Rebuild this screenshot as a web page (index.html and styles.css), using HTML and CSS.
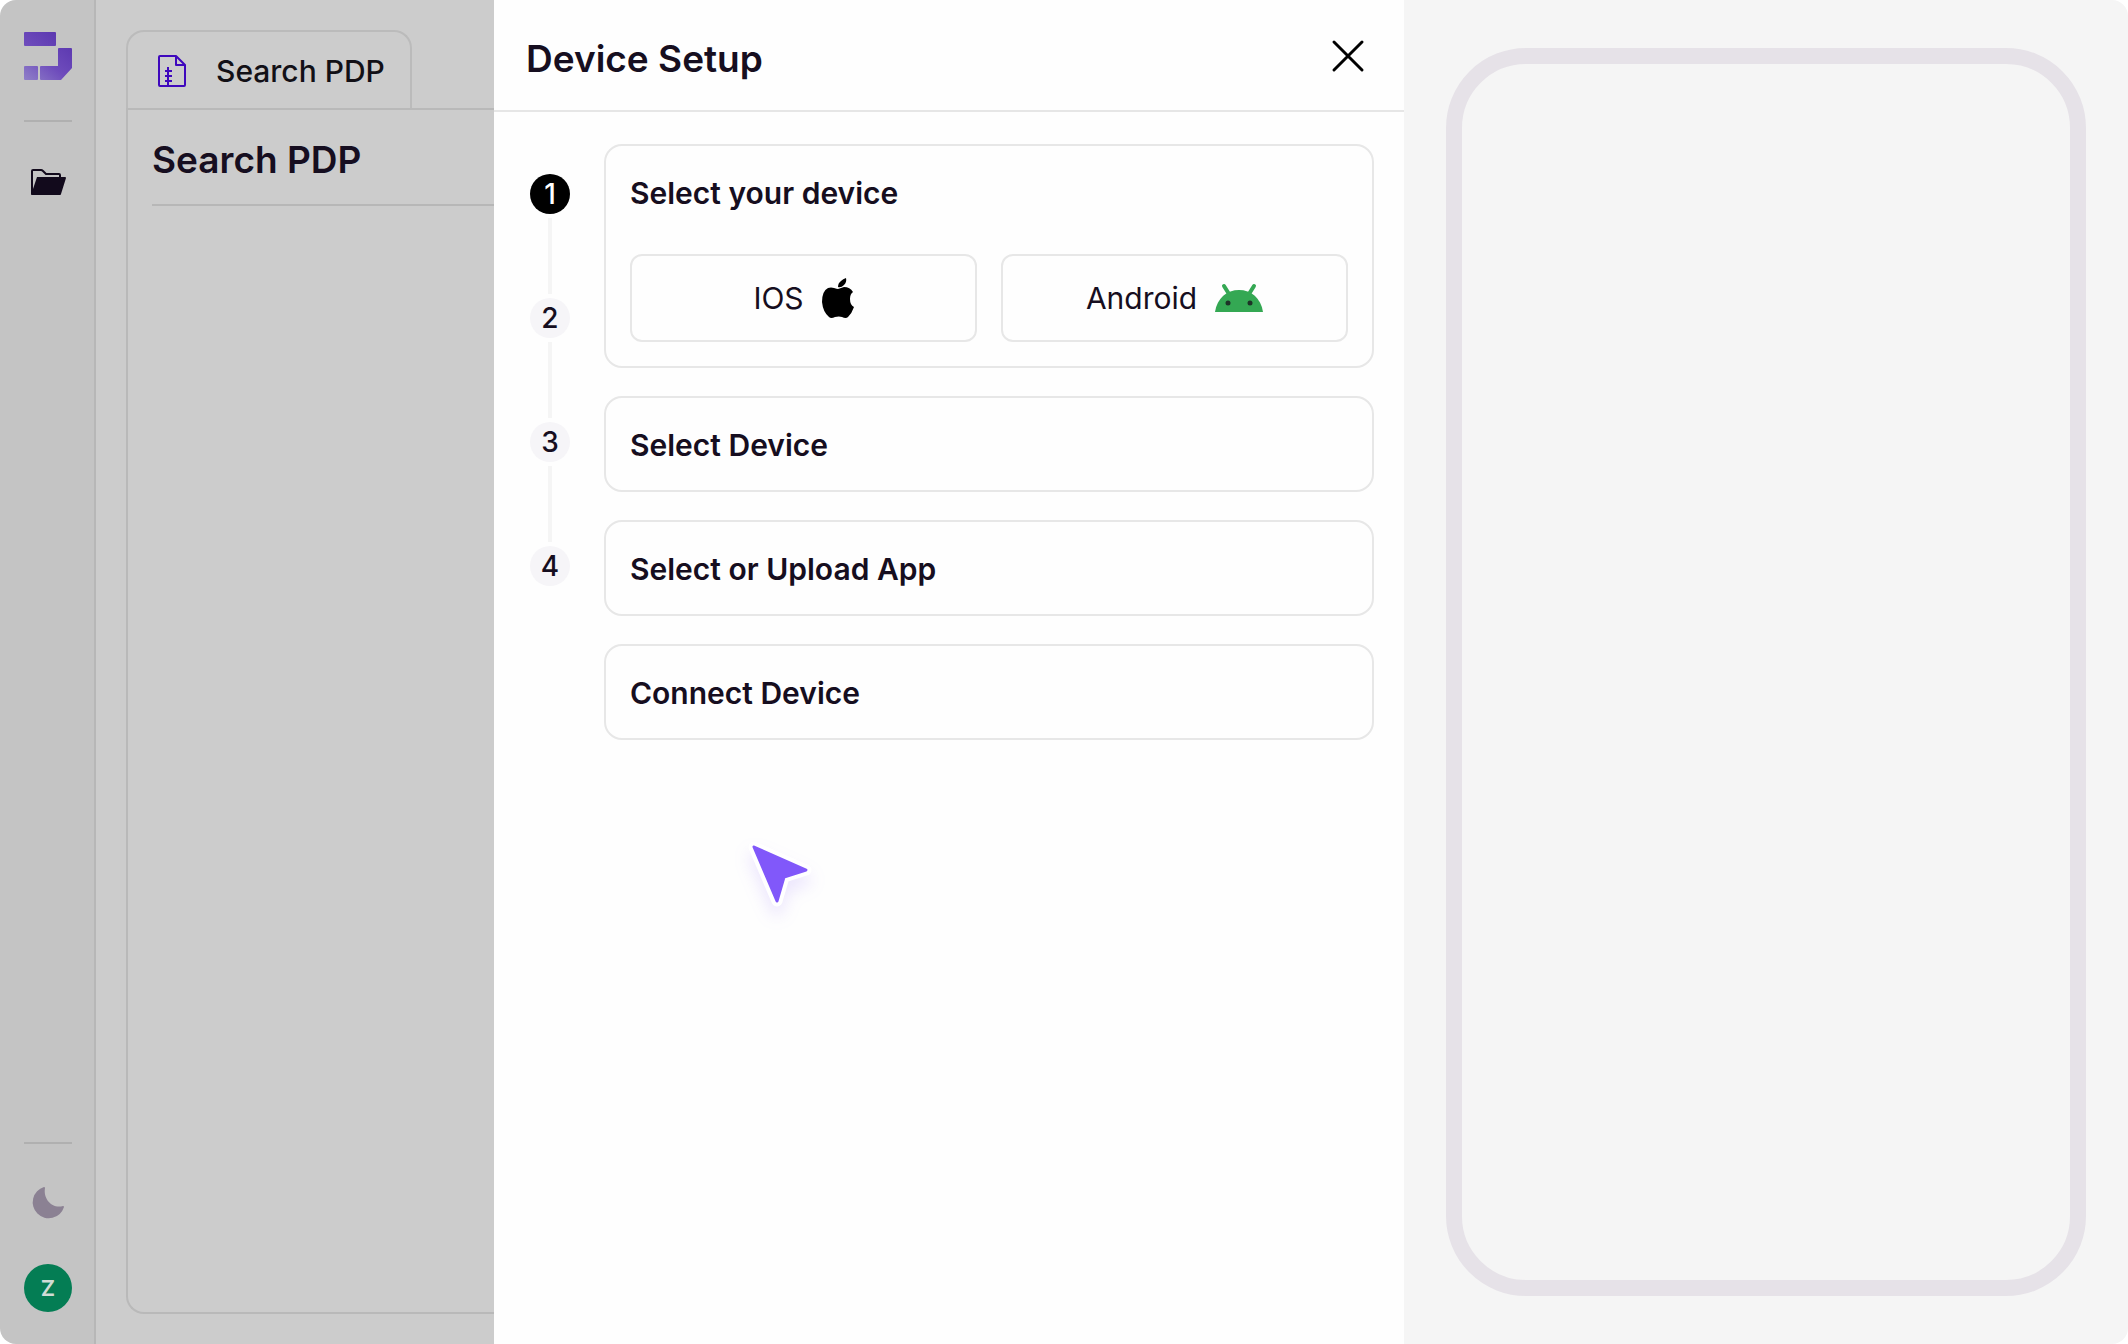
FILE: index.html
```html
<!DOCTYPE html>
<html lang="en">
<head>
<meta charset="UTF-8">
<meta name="viewport" content="width=device-width, initial-scale=1">
<title>Device Setup</title>
<link rel="stylesheet" href="styles.css">
</head>
<body>
<div class="app">
	<nav class="sidebar">
		<a href="#" class="logo" aria-label="Home">
			<svg width="48" height="48" viewBox="0 0 48 48">
				<defs>
					<linearGradient id="logoFill" x1="0" y1="48" x2="36" y2="4" gradientUnits="userSpaceOnUse">
						<stop offset="0" stop-color="#9080c8" />
						<stop offset="0.5" stop-color="#6e4cbc" />
						<stop offset="1" stop-color="#5c38b0" />
					</linearGradient>
				</defs>
				<g fill="url(#logoFill)">
					<rect width="32" height="14" rx="1" />
					<path d="M35 16h12a1 1 0 0 1 1 1v19L37 48H17a1 1 0 0 1-1-1V35a1 1 0 0 1 1-1h17V17a1 1 0 0 1 1-1z" />
					<rect y="34" width="14" height="14" rx="1" />
				</g>
			</svg>
		</a>
		<hr />
		<a href="#" class="folder" aria-label="Projects">
			<svg width="36" height="28" viewBox="0 0 36 28">
				<path d="M2 26V3q0-1 1-1h8q1 0 2 1l3 3h13q1 0 1 1v3" fill="none" stroke="#120a1c" stroke-width="2" />
				<path d="M7 9h28q1 0 1 1l-5 16q0 1-1 1H1z" fill="#120a1c" />
			</svg>
		</a>
		<div class="sidebar-bottom">
			<hr />
			<button type="button" class="theme" aria-label="Dark mode">
				<svg width="32" height="32" viewBox="0 0 32 32">
					<path d="M13 1C11 12 20 22 31 19Q32 19 32 20A16 16 0 1 1 12 0Q13 0 13 1z" fill="#8b8193" />
				</svg>
			</button>
			<button type="button" class="avatar">Z</button>
		</div>
	</nav>
	<main class="workspace">
		<a href="#" class="tab">
			<svg width="28" height="32" viewBox="0 0 28 32">
				<g fill="none" stroke="#3f08bd" stroke-width="2" stroke-linejoin="round">
					<path d="M2 1h16l9 9v20q0 1-1 1H2q-1 0-1-1V2q0-1 1-1z" />
					<path d="M18 1v9h9M10 12v18M7 16h7M7 21h7M7 26h7" />
				</g>
			</svg>
			<span>Search PDP</span>
		</a>
		<section class="panel">
			<h1>Search PDP</h1>
		</section>
	</main>
	<section class="drawer">
		<header>
			<h2>Device Setup</h2>
			<button type="button" class="close" aria-label="Close">
				<svg width="30" height="30" viewBox="0 0 30 30">
					<path d="M1 1l28 28M29 1L1 29" stroke="#000" stroke-width="3" stroke-linecap="round" />
				</svg>
			</button>
		</header>
		<div class="setup">
			<ol class="steps">
				<li class="active">1</li>
				<li>2</li>
				<li>3</li>
				<li>4</li>
			</ol>
			<div class="cards">
				<div class="card">
					<h3>Select your device</h3>
					<div class="platforms">
						<button type="button">IOS
							<svg width="32" height="40" viewBox="0 0 32 40">
								<path d="M24 0Q25 4 22 7Q19 10 16 9Q16 5 19 3Q21 1 24 0z" />
								<path d="M16 11Q19 10 22 9Q28 9 31 14Q28 16 28 21Q28 27 32 29Q30 35 26 39Q24 41 20 39Q17 38 13 39Q9 41 7 39Q1 34 0 24Q0 13 6 10Q9 9 12 10Q15 11 16 11z" />
							</svg>
						</button>
						<button type="button">Android
							<svg width="48" height="40" viewBox="0 0 48 40">
								<path d="M0 34C2 20 12 12 24 12S46 20 48 34z" fill="#34a853" />
								<path d="M9 8l5 8M39 8l-5 8" stroke="#34a853" stroke-width="4" stroke-linecap="round" />
								<circle cx="13" cy="25" r="2.500" fill="#1d3327" />
								<circle cx="35" cy="25" r="2.500" fill="#1d3327" />
							</svg>
						</button>
					</div>
				</div>
				<div class="card"><h3>Select Device</h3></div>
				<div class="card"><h3>Select or Upload App</h3></div>
				<div class="card"><h3>Connect Device</h3></div>
			</div>
		</div>
		<svg class="cursor" width="80" height="80" viewBox="0 0 80 80">
			<path d="M13 10L65 33L43 40L36 64z" fill="#fff" stroke="#fff" stroke-width="11" stroke-linejoin="round" />
			<path d="M13 10L65 33L43 40L36 64z" fill="#8158fa" stroke="#8158fa" stroke-width="3" stroke-linejoin="round" />
		</svg>
	</section>
	<aside class="preview">
		<div class="phone"></div>
	</aside>
</div>
</body>
</html>
```
FILE: styles.css
```css
* {
	box-sizing: border-box;
}

body {
	margin: 0;
	background-color: #fff;
	color: #160e20;
	font-family: Inter, "Liberation Sans", sans-serif;
	font-size: 30px;
	line-height: 36px;
}

h1, h2, h3, ol {
	margin: 0;
	padding: 0;
}
h1, h2 {
	font-size: 37px;
	font-weight: 600;
	line-height: 44px;
}
h3 {
	font-size: 30px;
	font-weight: 600;
	line-height: 36px;
}
a {
	color: inherit;
	text-decoration: none;
}
button {
	padding: 0;
	border: none;
	background: none;
	color: inherit;
	font: inherit;
	cursor: pointer;
}
svg {
	display: block;
	overflow: visible;
}

.app {
	display: grid;
	grid-template-columns: 96px 398fr 910fr 724fr;
	min-height: 100vh;
	border-radius: 16px;
	overflow: hidden;
}

/* sidebar */
.sidebar {
	display: flex;
	flex-direction: column;
	align-items: center;
	padding: 32px 0 32px 2px;
	border-right: 2px solid #b7b7b7;
	background-color: #c4c4c4;
}
.sidebar hr {
	width: 48px;
	height: 2px;
	margin: 40px 0 46px;
	border: none;
	background-color: #b0b0b0;
}
.sidebar-bottom {
	display: flex;
	flex-direction: column;
	align-items: center;
	margin-top: auto;
}
.sidebar-bottom hr {
	margin: 0 0 43px;
}
.avatar {
	width: 48px;
	height: 48px;
	margin-top: 45px;
	border-radius: 50%;
	background-color: #047d54;
	color: #cfdcd6;
	font-size: 22px;
	font-weight: 600;
}

/* workspace */
.workspace {
	display: flex;
	flex-direction: column;
	align-items: flex-start;
	min-width: 0;
	padding: 30px 0 30px 30px;
	background-color: #ccc;
}
.tab {
	display: flex;
	align-items: center;
	gap: 30px;
	height: 78px;
	padding: 2px 25px 0 30px;
	border: 2px solid #bbb;
	border-bottom: none;
	border-radius: 18px 18px 0 0;
	color: #121016;
	font-weight: 500;
	white-space: nowrap;
}
.panel {
	flex: 1;
	align-self: stretch;
	padding: 28px 0 0 24px;
	border: 2px solid #b9b9b9;
	border-right: none;
	border-radius: 0 0 0 18px;
}
.panel h1 {
	padding-bottom: 22px;
	border-bottom: 2px solid #b7b7b7;
}

/* drawer */
.drawer {
	position: relative;
	background-color: #fefefe;
}
.drawer header {
	display: flex;
	align-items: flex-start;
	justify-content: space-between;
	height: 112px;
	padding: 37px 41px 0 32px;
	border-bottom: 2px solid #e6e6e6;
}
.close {
	padding: 4px 0;
}
.setup {
	display: flex;
	gap: 34px;
	padding: 32px 30px 32px 36px;
}
.steps {
	width: 40px;
	padding-top: 30px;
	list-style-type: none;
}
.steps li {
	width: 40px;
	height: 40px;
	border-radius: 50%;
	background-color: #f6f5f8;
	font-size: 28px;
	font-weight: 500;
	line-height: 40px;
	text-align: center;
}
.steps li + li {
	position: relative;
	margin-top: 84px;
}
/* the line that joins a step to the one above */
.steps li + li::before {
	content: "";
	position: absolute;
	left: 18px;
	bottom: 44px;
	width: 4px;
	height: 76px;
	background-color: #f5f5f5;
}
.steps .active {
	background-color: #000;
	color: #fff;
}
.cards {
	flex: 1;
	display: flex;
	flex-direction: column;
	gap: 28px;
}
.card {
	padding: 29px 24px 24px;
	border: 2px solid #e7e7e7;
	border-radius: 18px;
}
.card h3 {
	padding-bottom: 3px;
}
.platforms {
	display: flex;
	gap: 24px;
	padding-top: 40px;
}
.platforms button {
	flex: 1;
	display: flex;
	align-items: center;
	justify-content: center;
	gap: 18px;
	height: 88px;
	border: 2px solid #e7e7e7;
	border-radius: 12px;
}
.cursor {
	position: absolute;
	left: 247px;
	top: 837px;
	filter: drop-shadow(0 10px 8px rgba(127, 86, 248, 0.14));
}

/* preview */
.preview {
	display: flex;
	padding: 48px 42px;
	background-color: #f5f5f5;
}
.phone {
	flex: 1;
	border: 16px solid #e6e2e8;
	border-radius: 80px;
}
```
